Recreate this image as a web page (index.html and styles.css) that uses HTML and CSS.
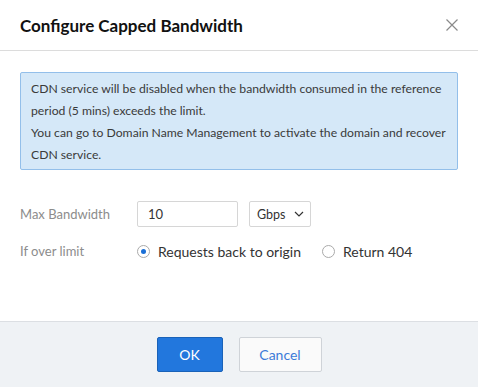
FILE: index.html
```html
<!DOCTYPE html>
<html>
<head>
<meta charset="utf-8">
<link rel="stylesheet" href="styles.css">
</head>
<body>
<div class="dialog">
  <div class="header">
    <h1 class="title">Configure Capped Bandwidth</h1>
    <svg class="close" width="12" height="12" viewBox="0 0 12 12"><path d="M0.5 0.5L11.5 11.5M11.5 0.5L0.5 11.5" stroke="#8a8a8a" stroke-width="1.2" fill="none"/></svg>
  </div>
  <div class="body">
    <div class="alert">
      <p>CDN service will be disabled when the bandwidth consumed in the reference<br>period (5 mins) exceeds the limit.</p>
      <p>You can go to Domain Name Management to activate the domain and recover<br>CDN service.</p>
    </div>
    <div class="form">
      <div class="row">
        <span class="label">Max Bandwidth</span>
        <div class="controls">
          <div class="input">10</div>
          <div class="select">Gbps <svg width="10" height="6" viewBox="0 0 10 6"><path d="M1 1L5 5L9 1" stroke="#333" stroke-width="1.2" fill="none"/></svg></div>
        </div>
      </div>
      <div class="row row2">
        <span class="label">If over limit</span>
        <div class="controls radios">
          <span class="radio"><span class="dot checked"></span>Requests back to origin</span>
          <span class="radio"><span class="dot"></span>Return 404</span>
        </div>
      </div>
    </div>
  </div>
  <div class="footer">
    <button class="btn primary">OK</button>
    <button class="btn cancel">Cancel</button>
  </div>
</div>
</body>
</html>
```
FILE: styles.css
```css
* { box-sizing: border-box; }
html, body { margin: 0; padding: 0; background: #fff; }
body { font-family: "Lato", "Open Sans", sans-serif; color: #333; width: 478px; height: 387px; overflow: hidden; }
.dialog { width: 478px; height: 387px; display: flex; flex-direction: column; }
.header { height: 51px; border-bottom: 1px solid #dcdcdc; display: flex; align-items: center; justify-content: space-between; padding: 0 20px 0 20px; }
.title { margin: 0; font-size: 17px; font-weight: 700; color: #111; }
.body { flex: 1; padding: 21px 20px 0 20px; }
.alert { background: #d5e8f8; border: 1px solid #93bfea; border-radius: 2px; padding: 5px 10px 3px 10px; font-size: 12.2px; line-height: 22px; color: #3a3a3a; white-space: nowrap; }
.alert p { margin: 0; }
.form { margin-top: 31px; }
.row { display: flex; align-items: center; }
.label { width: 117px; font-size: 13px; color: #8c8c8c; }
.controls { display: flex; gap: 11px; align-items: center; }
.input { width: 101px; height: 26px; border: 1px solid #d6d6d6; border-radius: 2px; padding: 0 10px; font-size: 13px; line-height: 24px; color: #333; }
.select { width: 62px; height: 26px; border: 1px solid #d6d6d6; border-radius: 2px; padding: 0 6px 0 7px; font-size: 12.5px; display: flex; align-items: center; justify-content: space-between; color: #333; }
.row2 { margin-top: 16px; align-items: center; }
.row2 .label { margin-top: -2px; }
.radios { gap: 21px; }
.radio { display: flex; align-items: center; font-size: 14px; color: #333; }
.dot { width: 13px; height: 13px; border: 1px solid #aaa; border-radius: 50%; margin-right: 8px; position: relative; background: #fff; }
.dot.checked::after { content: ""; position: absolute; left: 3px; top: 3px; width: 5px; height: 5px; border-radius: 50%; background: #1a6fd6; }
.footer { height: 66px; background: #eff2f5; border-top: 1px solid #dcdfe3; display: flex; justify-content: center; align-items: flex-start; padding-top: 15px; gap: 16px; }
.btn { height: 35px; font-family: inherit; font-size: 14px; border-radius: 2px; padding: 0; cursor: pointer; }
.primary { width: 66px; background: #2277dd; border: 1px solid #1a62b8; color: #fff; }
.cancel { width: 83px; background: #fafafa; border: 1px solid #cfd3d8; color: #3d7ad8; }
```
